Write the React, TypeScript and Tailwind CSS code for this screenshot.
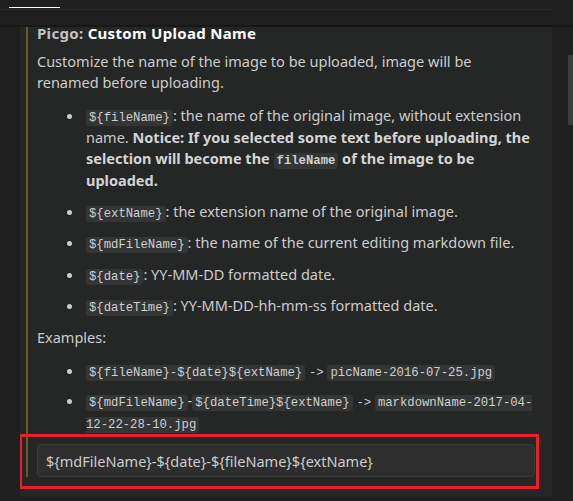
import type { ReactNode } from 'react'

function Code({ children }: { children: ReactNode }) {
  return (
    <code className="rounded-[3px] bg-[#343535] px-[3px] py-[1px] font-['Liberation_Mono',monospace] text-[12.25px] leading-none text-[#cfcfcf]">
      {children}
    </code>
  )
}

function Arrow() {
  return <span className="font-['Liberation_Mono',monospace] text-[12.25px] leading-none">-&gt;</span>
}

function Bullet({ children }: { children: ReactNode }) {
  return (
    <div className="flex">
      <div className="w-[49px] shrink-0 pl-[30px] pt-[9px]">
        <div className="h-[5px] w-[5px] rounded-full bg-[#cccccc]" />
      </div>
      <div className="min-w-0 flex-1">{children}</div>
    </div>
  )
}

export default function App() {
  return (
    <div className="h-[501px] w-[573px] overflow-hidden bg-[#1f1f1f] font-['Noto_Sans',sans-serif] text-[14.5px] leading-[21.6px] text-[#cccccc]">
      {/* tab strip */}
      <div className="h-[25px] pr-[21px] pt-[7px]">
        <div className="ml-[9px] h-px w-[51px] bg-white" />
        <div className="mt-px h-px bg-[#2a2a2a]" />
      </div>
      <div className="h-[2px] bg-[#181818]" />

      <div className="flex h-[474px]">
        <div className="w-[20px] shrink-0" />

        <div className="h-[470px] flex-1 overflow-hidden bg-[#252626] pr-[17px]">
          <div className="ml-[6px] -mt-[5px] border-l-2 border-[#6f5527] pl-[9px]">
            <div className="pt-[1px] text-[15px] font-bold tracking-[0.3px]">
              <span className="text-[#c2c2c2]">Picgo: </span>
              <span className="text-white">Custom Upload Name</span>
            </div>
            <p className="mt-[6px]">
              Customize the name of the image to be uploaded, image will be renamed before uploading.
            </p>

            <div className="mt-[11.4px] flex flex-col gap-[9.6px]">
              <Bullet>
                <Code>{'${fileName}'}</Code>: the name of the original image, without extension name.{' '}
                <b className="text-[#d4d4d4]">
                  Notice: If you selected some text before uploading, the selection will become the{' '}
                  <Code>fileName</Code> of the image to be uploaded.
                </b>
              </Bullet>
              <Bullet>
                <Code>{'${extName}'}</Code>: the extension name of the original image.
              </Bullet>
              <Bullet>
                <Code>{'${mdFileName}'}</Code>: the name of the current editing markdown file.
              </Bullet>
              <Bullet>
                <Code>{'${date}'}</Code>: YY-MM-DD formatted date.
              </Bullet>
              <Bullet>
                <Code>{'${dateTime}'}</Code>: YY-MM-DD-hh-mm-ss formatted date.
              </Bullet>
            </div>

            <p className="mt-[10.6px]">Examples:</p>

            <div className="mt-[11.4px] flex flex-col gap-[8.6px]">
              <Bullet>
                <Code>{'${fileName}-${date}${extName}'}</Code> <Arrow /> <Code>picName-2016-07-25.jpg</Code>
              </Bullet>
              <Bullet>
                <Code>{'${mdFileName}'}</Code>-<Code>{'${dateTime}${extName}'}</Code> <Arrow />{' '}
                <Code>markdownName-2017-04-12-22-28-10.jpg</Code>
              </Bullet>
            </div>

            <div className="relative mt-[11px]">
              <input
                readOnly
                value="${mdFileName}-${date}-${fileName}${extName}"
                className="block h-[33px] w-full rounded-[4px] border border-[#3a3a3a] bg-[#2e2e2e] px-[8px] font-['Noto_Sans',sans-serif] text-[14.5px] text-[#cccccc] outline-none"
              />
              <div className="pointer-events-none absolute -bottom-[12px] -left-[18px] -right-[4px] -top-[10px] border-[3px] border-[#e8202a]" />
            </div>
          </div>
        </div>

        {/* scrollbar */}
        <div className="w-[21px] shrink-0 pt-[28px]">
          <div className="ml-auto h-[70px] w-[5px] bg-[#3d3d3d]" />
        </div>
      </div>
    </div>
  )
}
